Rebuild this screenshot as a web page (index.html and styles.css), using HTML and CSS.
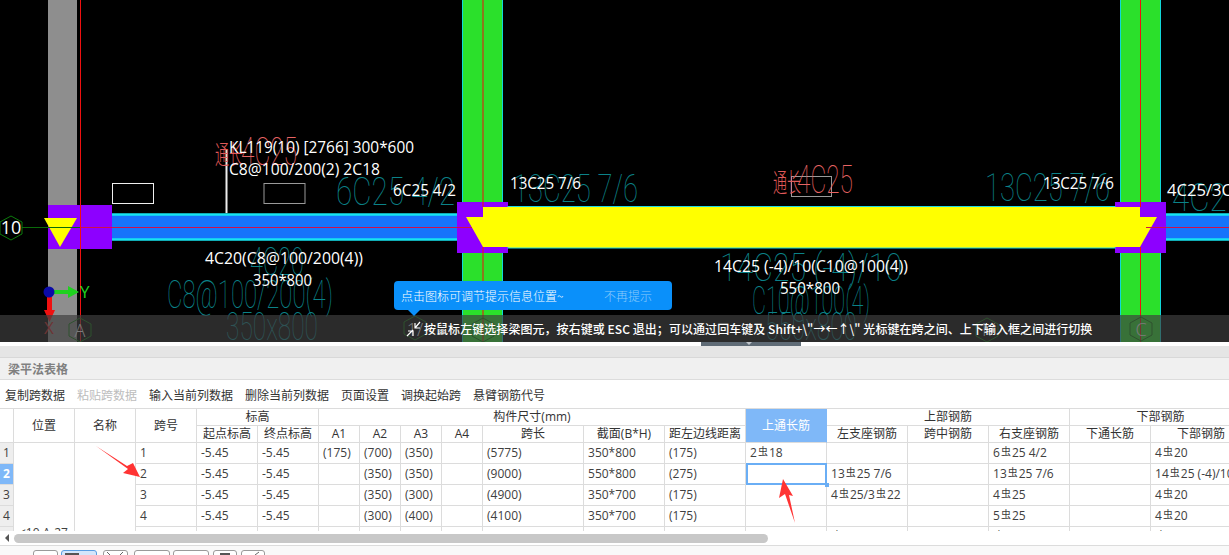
FILE: index.html
```html
<!DOCTYPE html>
<html lang="zh-CN">
<head>
<meta charset="utf-8">
<title>梁平法表格</title>
<link rel="stylesheet" href="styles.css">
</head>
<body>
<div class="page">
  <section class="cad">
    <svg class="cad-svg" width="1229" height="342" viewBox="0 0 1229 342">
      <rect class="col-gray" x="48" y="0" width="29" height="342"/>
      <rect class="col-green" x="462.5" y="-2" width="40" height="346"/>
      <rect class="col-green" x="1120.5" y="-2" width="40" height="346"/>

      <rect class="beam-blue" x="108" y="214.500" width="352" height="25"/>
      <rect class="beam-blue" x="1160" y="214.500" width="72" height="25"/>
      <rect class="purple" x="48" y="205" width="64" height="44"/>
      <rect class="purple" x="457" y="202" width="51" height="51"/>
      <rect class="purple" x="1115" y="202" width="51" height="51"/>
      <rect class="beam-edge" x="508" y="206.500" width="607" height="41.500"/>
      <polygon class="yellow" points="483,207 1140,207 1140,217 1157,217 1140,247 483,247 466,217 483,217"/>
      <polygon class="yellow" points="44,218 77,218 60,247"/>

      <line class="axis-line" x1="22" y1="227.500" x2="80" y2="227.500"/>
      <line class="red-line dim" x1="80" y1="227.500" x2="472" y2="227.500"/>
      <line class="red-line dim" x1="1146" y1="227.500" x2="1229" y2="227.500"/>
      <line class="red-line" x1="80.500" y1="0" x2="80.500" y2="342"/>
      <line class="red-line" x1="483" y1="0" x2="483" y2="207"/>
      <line class="red-line" x1="483" y1="247" x2="483" y2="342"/>
      <line class="red-line" x1="1140.500" y1="0" x2="1140.500" y2="207"/>
      <line class="red-line" x1="1140.500" y1="247" x2="1140.500" y2="342"/>
      <line class="white-line" x1="226.500" y1="150" x2="226.500" y2="213"/>

      <rect class="box" x="112.500" y="183.500" width="41" height="20"/>
      <rect class="box grey" x="264" y="183.500" width="41" height="20"/>
      <rect class="box grey" x="791.500" y="176.500" width="40" height="20"/>

      <text class="t-teal" x="336" y="205" textLength="119" lengthAdjust="spacingAndGlyphs">6C25 4/2</text>
      <text class="t-teal" x="513" y="202" textLength="125" lengthAdjust="spacingAndGlyphs">13C25 7/6</text>
      <text class="t-teal" x="985" y="201" textLength="125" lengthAdjust="spacingAndGlyphs">13C25 7/6</text>
      <text class="t-teal" x="1172" y="211" textLength="72" lengthAdjust="spacingAndGlyphs">4C25</text>
      <text class="t-teal" x="250" y="275" textLength="54" lengthAdjust="spacingAndGlyphs">4C20</text>
      <text class="t-teal" x="167" y="308" textLength="166" lengthAdjust="spacingAndGlyphs">C8@100/200(4)</text>
      <text class="t-teal" x="226" y="340" textLength="92" lengthAdjust="spacingAndGlyphs">350x800</text>
      <text class="t-teal" x="720" y="281" textLength="182" lengthAdjust="spacingAndGlyphs">14C25 (-4)/10</text>
      <text class="t-teal" x="752" y="314" textLength="118" lengthAdjust="spacingAndGlyphs">C10@100(4)</text>
      <text class="t-teal" x="765" y="340" textLength="92" lengthAdjust="spacingAndGlyphs">550x800</text>

      <text class="t-red-cn" x="215" y="164" textLength="28" lengthAdjust="spacingAndGlyphs">通长</text>
      <text class="t-red" x="241" y="165" textLength="56" lengthAdjust="spacingAndGlyphs">4C25</text>
      <text class="t-red-cn" x="773" y="192" textLength="28" lengthAdjust="spacingAndGlyphs">通长</text>
      <text class="t-red" x="797" y="193" textLength="56" lengthAdjust="spacingAndGlyphs">4C25</text>

      <text class="t-white" x="229" y="153" textLength="185" lengthAdjust="spacingAndGlyphs">KL119(10) [2766] 300*600</text>
      <text class="t-white" x="229" y="175" textLength="151" lengthAdjust="spacingAndGlyphs">C8@100/200(2) 2C18</text>
      <text class="t-white" x="393" y="196" textLength="63" lengthAdjust="spacingAndGlyphs">6C25 4/2</text>
      <text class="t-white" x="510" y="189" textLength="71" lengthAdjust="spacingAndGlyphs">13C25 7/6</text>
      <text class="t-white" x="1043" y="189" textLength="71" lengthAdjust="spacingAndGlyphs">13C25 7/6</text>
      <text class="t-white" x="1167" y="196" textLength="65" lengthAdjust="spacingAndGlyphs">4C25/3C</text>
      <text class="t-white" x="205" y="264" textLength="158" lengthAdjust="spacingAndGlyphs">4C20(C8@100/200(4))</text>
      <text class="t-white" x="253" y="286" textLength="59" lengthAdjust="spacingAndGlyphs">350*800</text>
      <text class="t-white" x="714" y="272" textLength="194" lengthAdjust="spacingAndGlyphs">14C25 (-4)/10(C10@100(4))</text>
      <text class="t-white" x="780" y="294" textLength="60" lengthAdjust="spacingAndGlyphs">550*800</text>

      <polygon class="hex" points="11,216 22,222 22,234 11,240 0,234 0,222"/>
      <text class="t-hex" x="11" y="234">10</text>
      <polygon class="hex" points="80,318 91,324 91,336 80,342 69,336 69,324"/>
      <text class="t-hex big" x="80" y="337">A</text>
      <polygon class="hex" points="415,316 426,322 426,334 415,340 404,334 404,322"/>
      <text class="t-hex big" x="415" y="336">1/</text>
      <polygon class="hex" points="483,318 494,324 494,336 483,342 472,336 472,324"/>
      <polygon class="hex" points="987,318 998,324 998,336 987,342 976,336 976,324"/>
      <text class="t-hex big" x="987" y="336">1/</text>
      <polygon class="hex" points="1141,317 1152,323 1152,335 1141,341 1130,335 1130,323"/>
      <text class="t-hex big" x="1141" y="336">C</text>

      <polygon class="arrow-green" points="54,290 68,290 68,286 79,292 68,298 68,294 54,294"/>
      <polygon class="arrow-red" points="47,297 52,297 52,310 55,310 49.500,322 44,310 47,310"/>
      <circle class="axis-dot" cx="49" cy="292" r="5.500"/>
      <text class="t-y" x="80" y="298">Y</text>
      <text class="t-x" x="44" y="334">X</text>
    </svg>

    <div class="status">
      <svg class="status-icon" width="16" height="18" viewBox="0 0 16 18">
        <path d="M9 8 L14 2 M9 3 V8 H14 M7 10 L1 16 M2 11 H7 V16"/>
      </svg>
      <span class="status-text">按鼠标左键选择梁图元，按右键或 ESC 退出；可以通过回车键及 Shift+\"→←↑\" 光标键在跨之间、上下输入框之间进行切换</span>
    </div>

    <div class="tip">
      <span class="tip-text">点击图标可调节提示信息位置~</span>
      <span class="tip-off">不再提示</span>
    </div>
  </section>

  <div class="gutter"><div class="handle"></div></div>
  <div class="band"></div>
  <div class="title">梁平法表格</div>

  <nav class="toolbar">
    <span>复制跨数据</span>
    <span class="disabled">粘贴跨数据</span>
    <span>输入当前列数据</span>
    <span>删除当前列数据</span>
    <span>页面设置</span>
    <span>调换起始跨</span>
    <span>悬臂钢筋代号</span>
  </nav>

  <div class="grid-wrap">
    <table class="grid">
      <colgroup>
        <col class="c14"><col class="c61"><col class="c61"><col class="c61"><col class="c61"><col class="c61">
        <col class="c41"><col class="c41"><col class="c41"><col class="c41">
        <col class="c101"><col class="c81"><col class="c81"><col class="c81">
        <col class="c81"><col class="c81"><col class="c81"><col class="c81"><col class="c101">
      </colgroup>
      <thead>
        <tr class="hr">
          <th rowspan="2" class="corner"></th>
          <th rowspan="2">位置</th>
          <th rowspan="2">名称</th>
          <th rowspan="2">跨号</th>
          <th colspan="2">标高</th>
          <th colspan="7">构件尺寸(mm)</th>
          <th rowspan="2" class="active-head">上通长筋</th>
          <th colspan="3">上部钢筋</th>
          <th colspan="2">下部钢筋</th>
        </tr>
        <tr class="hr">
          <th>起点标高</th><th>终点标高</th>
          <th>A1</th><th>A2</th><th>A3</th><th>A4</th>
          <th>跨长</th><th>截面(B*H)</th><th>距左边线距离</th>
          <th>左支座钢筋</th><th>跨中钢筋</th><th>右支座钢筋</th>
          <th>下通长筋</th><th>下部钢筋</th>
        </tr>
      </thead>
      <tbody>
        <tr>
          <td class="num">1</td>
          <td rowspan="5" class="loc">&lt;10,A-27</td>
          <td rowspan="5"></td>
          <td>1</td><td>-5.45</td><td>-5.45</td>
          <td>(175)</td><td>(700)</td><td>(350)</td><td></td>
          <td>(5775)</td><td>350*800</td><td>(175)</td>
          <td>2<i class="bar">虫</i>18</td>
          <td></td><td></td><td>6<i class="bar">虫</i>25 4/2</td>
          <td></td><td>4<i class="bar">虫</i>20</td>
        </tr>
        <tr>
          <td class="num cur">2</td>
          <td>2</td><td>-5.45</td><td>-5.45</td>
          <td></td><td>(350)</td><td>(350)</td><td></td>
          <td>(9000)</td><td>550*800</td><td>(275)</td>
          <td class="selected"></td>
          <td>13<i class="bar">虫</i>25 7/6</td><td></td><td>13<i class="bar">虫</i>25 7/6</td>
          <td></td><td>14<i class="bar">虫</i>25 (-4)/10</td>
        </tr>
        <tr>
          <td class="num">3</td>
          <td>3</td><td>-5.45</td><td>-5.45</td>
          <td></td><td>(350)</td><td>(300)</td><td></td>
          <td>(4900)</td><td>350*700</td><td>(175)</td>
          <td></td>
          <td>4<i class="bar">虫</i>25/3<i class="bar">虫</i>22</td><td></td><td>4<i class="bar">虫</i>25</td>
          <td></td><td>4<i class="bar">虫</i>20</td>
        </tr>
        <tr>
          <td class="num">4</td>
          <td>4</td><td>-5.45</td><td>-5.45</td>
          <td></td><td>(300)</td><td>(400)</td><td></td>
          <td>(4100)</td><td>350*700</td><td>(175)</td>
          <td></td>
          <td></td><td></td><td>5<i class="bar">虫</i>25</td>
          <td></td><td>4<i class="bar">虫</i>20</td>
        </tr>
        <tr>
          <td class="num"></td>
          <td></td><td></td><td></td>
          <td></td><td></td><td></td><td></td>
          <td></td><td></td><td></td>
          <td></td>
          <td><i class="bar">虫</i></td><td></td><td><i class="bar">虫</i></td>
          <td></td><td><i class="bar">虫</i></td>
        </tr>
      </tbody>
    </table>
    <svg class="marks" width="1229" height="123" viewBox="0 408 1229 123">
      <polygon points="96,445 127,465 133,462 140,476 123,472 128,468"/>
      <polygon points="783,478 793,495 789,494 795,522 785,493 779,497"/>
    </svg>
  </div>

  <div class="scroll">
    <span class="scroll-arrow"></span>
    <span class="scroll-thumb"></span>
  </div>

  <div class="footer">
    <span class="fbtn w25"></span>
    <span class="fbtn w36 on"><span class="peek-bar"></span></span>
    <span class="fbtn w25 wide-gap">
      <svg class="peek-x" width="23" height="8" viewBox="0 0 23 8"><path d="M3 1 L7 5 M19 1 L15 5"/></svg>
    </span>
    <span class="fbtn w36 wide-gap"></span>
    <span class="fbtn w36"></span>
    <span class="fbtn w24 near-gap"><span class="peek-bar short"></span></span>
    <span class="fbtn w24 near-gap">
      <svg class="peek-x" width="22" height="8" viewBox="0 0 22 8"><path d="M13 4 L17 1"/></svg>
    </span>
  </div>
</div>
</body>
</html>
```
FILE: styles.css
```css
* { box-sizing: border-box; }
html, body { margin: 0; padding: 0; background: #fff; overflow: hidden; }
body { font-family: "Open Sans", "Noto Sans CJK SC", sans-serif; font-size: 12px; color: #333; }
.page { width: 1229px; height: 555px; overflow: hidden; display: flex; flex-direction: column; }

/* CAD canvas */
.cad { position: relative; flex: none; height: 342px; background: #000; overflow: hidden; }
.cad-svg { display: block; position: absolute; left: 0; top: 0; }
.col-gray { fill: #8e8e8e; }
.col-green { fill: #2be02b; stroke: #10d8d8; stroke-width: 1; }
.beam-blue { fill: #1674fb; stroke: #16e4f0; stroke-width: 2.500; }
.beam-edge { fill: #ff0; stroke: #22d8e0; stroke-width: 1; }
.purple { fill: #8d00ff; }
.yellow { fill: #ff0; }
.axis-line { stroke: #0a6a0a; stroke-width: 1; }
.red-line { stroke: #f01010; stroke-width: 1; }
.red-line.dim { stroke: #d0104a; }
.white-line { stroke: #eee; stroke-width: 2; }
.box { fill: none; stroke: #f0f0f0; stroke-width: 1; }
.box.grey { stroke: #9a9a9a; }
.hex { fill: none; stroke: #0c7a0c; stroke-width: 1; }
.t-hex { fill: #fff; font-family: "Open Sans", sans-serif; font-size: 18px; text-anchor: middle; }
.t-hex.big { font-weight: 300; }
.t-teal { fill: #0b8288; font-family: "Roboto", sans-serif; font-weight: 100; font-size: 39px; }
.t-red { fill: #e86464; font-family: "Roboto", sans-serif; font-weight: 100; font-size: 39px; }
.t-red-cn { fill: #e05a5a; font-family: "Noto Sans CJK SC", sans-serif; font-weight: 300; font-size: 26px; }
.t-white { fill: #fff; font-family: "Open Sans", sans-serif; font-size: 15.500px; }
.t-y { fill: #1fd21f; font-family: "Open Sans", sans-serif; font-size: 17px; }
.t-x { fill: #d02020; font-family: "Open Sans", sans-serif; font-size: 17px; }
.arrow-green { fill: #1fd21f; }
.arrow-red { fill: #f01010; }
.axis-dot { fill: #0a0aa8; }

.status {
  position: absolute; left: 0; right: 0; top: 315px; height: 27px;
  background: rgba(62, 62, 62, .69);
  display: flex; align-items: center; padding-left: 406px;
}
.status-icon { flex: none; }
.status-icon path { fill: none; stroke: #fff; stroke-width: 1.200; }
.status-text {
  margin-left: 2px; color: #fff; font-family: "Noto Sans CJK SC", sans-serif;
  font-size: 12px; font-weight: 500; white-space: nowrap; letter-spacing: .055px;
}
.tip {
  position: absolute; left: 394px; top: 281px; width: 278px; height: 29px;
  background: #0a90fa; border-radius: 4px; color: #fff;
  display: flex; align-items: center; padding-left: 7px; font-size: 12px;
  font-family: "Noto Sans CJK SC", sans-serif; font-weight: 300;
}
.tip::after {
  content: ""; position: absolute; left: 14px; top: 29px;
  border: 6px solid transparent; border-top-color: #0a90fa; border-bottom: 0;
}
.tip-text { width: 203px; white-space: nowrap; }
.tip-off { color: #8ecbfb; white-space: nowrap; }

/* split */
.gutter { flex: none; height: 4px; background: #fff; padding-left: 701px; }
.handle { width: 100px; height: 4px; background: #5f6b76; position: relative; }
.handle::after {
  content: ""; position: absolute; left: 45px; top: 0;
  border: 3px solid transparent; border-top-color: #c0c6cc; border-bottom: 0;
}
.band { flex: none; height: 12px; background: #e5e5e5; border-bottom: 1px solid #d8d8d8; }
.title {
  flex: none; height: 22px; background: #f0f0f0; border-bottom: 1px solid #dcdcdc;
  padding-left: 8px; line-height: 21px; color: #808080; font-weight: 600;
  font-family: "Noto Sans CJK SC", sans-serif;
}
.toolbar {
  flex: none; height: 28px; background: #fff; display: flex; align-items: center;
  gap: 12px; padding-left: 5px; font-family: "Noto Sans CJK SC", sans-serif; color: #333;
}
.toolbar .disabled { color: #bdbdbd; }

/* grid */
.grid-wrap {
  flex: none; height: 123px; overflow: hidden; position: relative;
  border-top: 1px solid #dcdcdc;
}
.grid { border-collapse: separate; border-spacing: 0; table-layout: fixed; width: 1251px; }
.c14 { width: 14px; } .c61 { width: 61px; } .c41 { width: 41px; }
.c81 { width: 81px; } .c101 { width: 101px; }
.grid th, .grid td {
  border-right: 1px solid #dcdcdc; border-bottom: 1px solid #dcdcdc;
  padding: 0; white-space: nowrap; overflow: hidden;
}
.grid th {
  height: 17px; line-height: 16px; font-weight: 400; text-align: center; color: #333;
  font-family: "Open Sans", "Noto Sans CJK SC", sans-serif;
}
.grid td { height: 21px; line-height: 20px; padding-left: 4px; color: #404040; font-size: 12px; }
.grid td.num { padding: 0; text-align: center; background: #eee; }
.grid td.cur { background: #7fb8f8; color: #fff; font-weight: 700; }
.grid th.corner { background: #fff; }
.grid th.active-head { background: #7fb8f8; color: #fff; border-right-color: #7fb8f8; }
.grid td.loc { vertical-align: top; padding: 80px 0 0 5px; }
.grid td.selected { position: relative; overflow: visible; }
.grid td.selected::before {
  content: ""; position: absolute; left: 0; right: -1px; top: -1px; bottom: -1px;
  border: 2px solid #6aaef5;
}
.grid td.selected::after {
  content: ""; position: absolute; right: -3px; bottom: -3px; width: 4px; height: 4px; background: #6aaef5;
}
.bar {
  font-family: "Noto Sans CJK SC", sans-serif; font-style: normal; font-size: 10px;
  position: relative; top: -2px; margin: 0 1px;
}
.marks { position: absolute; left: 0; top: 0; pointer-events: none; }
.marks polygon { fill: #f33; }

/* scrollbar + footer */
.scroll {
  flex: none; height: 15px; background: #fff; border-bottom: 1px solid #dcdcdc;
  display: flex; align-items: center; padding-left: 5px; position: relative;
}
.scroll-arrow {
  width: 0; height: 0; border: 4px solid transparent; border-right-color: #555; border-left: 0;
}
.scroll-thumb { margin-left: 5px; width: 754px; height: 9px; border-radius: 5px; background: #c8c8c8; }
.footer {
  flex: 1; background: #f9f9f9; display: flex; gap: 3px; padding: 4px 0 0 33px; align-items: flex-start;
}
.fbtn { height: 12px; border: 1px solid #9a9a9a; border-radius: 3px 3px 0 0; background: #fff; }
.fbtn.on { background: #d3e6fb; border-color: #5a9de0; }
.wide-gap { margin-left: 3px; }
.near-gap { margin-left: 1px; }
.w25 { width: 25px; } .w36 { width: 36px; } .w24 { width: 24px; }
.peek-bar { display: block; width: 14px; height: 2px; margin: 2px 0 0 3px; background: #555; }
.peek-bar.short { width: 10px; margin-left: 6px; }
.peek-x { display: block; }
.peek-x path { fill: none; stroke: #666; stroke-width: 1; }
```
